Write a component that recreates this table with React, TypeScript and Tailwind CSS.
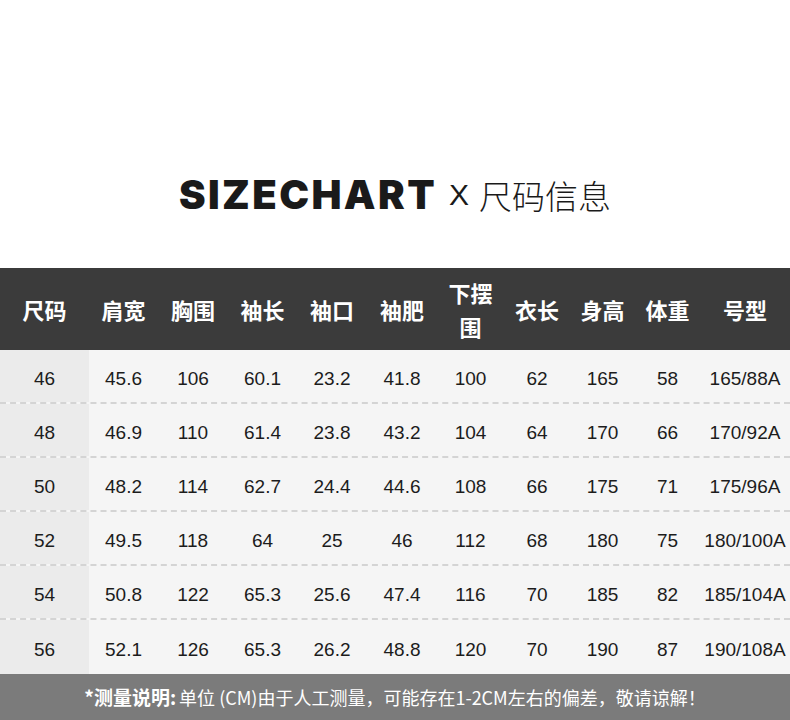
import React from 'react';

const headers = ['尺码', '肩宽', '胸围', '袖长', '袖口', '袖肥', '下摆围', '衣长', '身高', '体重', '号型'];

const rows: string[][] = [
  ['46', '45.6', '106', '60.1', '23.2', '41.8', '100', '62', '165', '58', '165/88A'],
  ['48', '46.9', '110', '61.4', '23.8', '43.2', '104', '64', '170', '66', '170/92A'],
  ['50', '48.2', '114', '62.7', '24.4', '44.6', '108', '66', '175', '71', '175/96A'],
  ['52', '49.5', '118', '64', '25', '46', '112', '68', '180', '75', '180/100A'],
  ['54', '50.8', '122', '65.3', '25.6', '47.4', '116', '70', '185', '82', '185/104A'],
  ['56', '52.1', '126', '65.3', '26.2', '48.8', '120', '70', '190', '87', '190/108A'],
];

const cols = 'grid grid-cols-[89px_69px_70px_69px_70px_70px_67px_66px_65px_65px_90px]';

const App: React.FC = () => {
  return (
    <div className="w-[790px] h-[720px] bg-white flex flex-col overflow-hidden font-['Liberation_Sans','Noto_Sans_CJK_SC',sans-serif]">
      <div className="h-[268px] flex items-center justify-center pt-[122px]">
        <div className="flex items-center">
          <span className="font-['Inter',sans-serif] font-black text-[40px] tracking-[2.4px] text-[#1a1a1a] leading-none">
            SIZECHART
          </span>
          <span className="ml-[12px] font-['Liberation_Sans',sans-serif] text-[30px] text-[#1a1a1a] leading-none">
            X
          </span>
          <span className="ml-[10px] font-['Noto_Sans_CJK_SC',sans-serif] font-light text-[33px] text-[#1a1a1a] leading-none">
            尺码信息
          </span>
        </div>
      </div>

      <div className={`${cols} h-[82px] bg-[#3b3b3b] text-white font-['Noto_Sans_CJK_SC',sans-serif] font-bold text-[22px]`}>
        {headers.map((h) => (
          <div key={h} className="flex items-center justify-center text-center">
            {h === '下摆围' ? (
              <span className="leading-[34px]">
                下摆
                <br />围
              </span>
            ) : (
              <span>{h}</span>
            )}
          </div>
        ))}
      </div>

      {rows.map((r, i) => (
        <div
          key={r[0]}
          className={`${cols} h-[54px] bg-[#f5f5f5] text-[19px] text-[#1c1c1c] ${
            i < rows.length - 1 ? 'border-b-2 border-dashed border-[#d4d4d4]' : ''
          }`}
        >
          {r.map((v, j) => (
            <div key={j} className={`flex items-center justify-center pt-[7px] ${j === 0 ? 'bg-[#ebebeb]' : ''}`}>
              {v}
            </div>
          ))}
        </div>
      ))}

      <div className="flex-1 bg-[#7b7b7b] flex items-center justify-center text-white text-[18px] font-['Noto_Sans_CJK_SC',sans-serif]">
        <span className="font-bold text-[19px]">*测量说明:</span>
        <span className="ml-[3px]">单位 (CM)由于人工测量，可能存在1-2CM左右的偏差，敬请谅解！</span>
      </div>
    </div>
  );
};

export default App;
